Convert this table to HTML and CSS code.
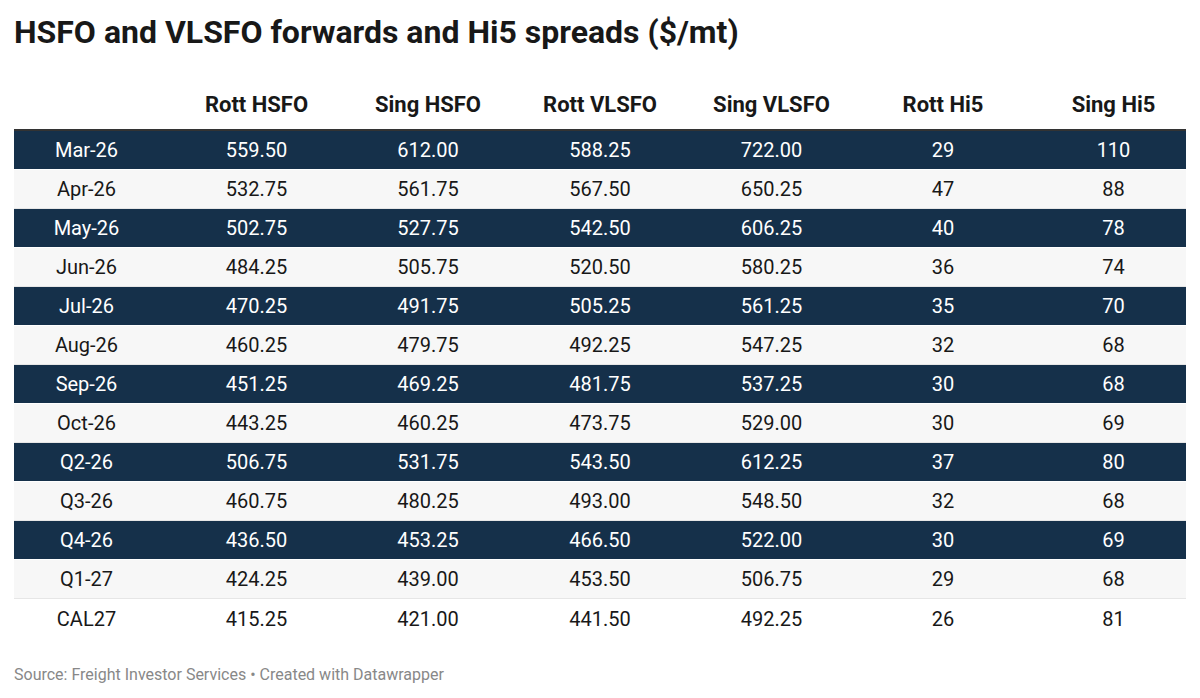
FILE: index.html
```html
<!DOCTYPE html>
<html lang="en">
<head>
<meta charset="utf-8">
<title>HSFO and VLSFO forwards and Hi5 spreads</title>
<link rel="stylesheet" href="styles.css">
</head>
<body>
<div class="chart">
  <h1 class="title">HSFO and VLSFO forwards and Hi5 spreads ($/mt)</h1>
  <div class="table">
    <div class="row head">
      <div class="cell first"></div>
      <div class="cell">Rott HSFO</div>
      <div class="cell">Sing HSFO</div>
      <div class="cell">Rott VLSFO</div>
      <div class="cell">Sing VLSFO</div>
      <div class="cell">Rott Hi5</div>
      <div class="cell last">Sing Hi5</div>
    </div>
    <div class="row dark"><div class="cell first">Mar-26</div><div class="cell">559.50</div><div class="cell">612.00</div><div class="cell">588.25</div><div class="cell">722.00</div><div class="cell">29</div><div class="cell last">110</div></div>
    <div class="row light"><div class="cell first">Apr-26</div><div class="cell">532.75</div><div class="cell">561.75</div><div class="cell">567.50</div><div class="cell">650.25</div><div class="cell">47</div><div class="cell last">88</div></div>
    <div class="row dark"><div class="cell first">May-26</div><div class="cell">502.75</div><div class="cell">527.75</div><div class="cell">542.50</div><div class="cell">606.25</div><div class="cell">40</div><div class="cell last">78</div></div>
    <div class="row light"><div class="cell first">Jun-26</div><div class="cell">484.25</div><div class="cell">505.75</div><div class="cell">520.50</div><div class="cell">580.25</div><div class="cell">36</div><div class="cell last">74</div></div>
    <div class="row dark"><div class="cell first">Jul-26</div><div class="cell">470.25</div><div class="cell">491.75</div><div class="cell">505.25</div><div class="cell">561.25</div><div class="cell">35</div><div class="cell last">70</div></div>
    <div class="row light"><div class="cell first">Aug-26</div><div class="cell">460.25</div><div class="cell">479.75</div><div class="cell">492.25</div><div class="cell">547.25</div><div class="cell">32</div><div class="cell last">68</div></div>
    <div class="row dark"><div class="cell first">Sep-26</div><div class="cell">451.25</div><div class="cell">469.25</div><div class="cell">481.75</div><div class="cell">537.25</div><div class="cell">30</div><div class="cell last">68</div></div>
    <div class="row light"><div class="cell first">Oct-26</div><div class="cell">443.25</div><div class="cell">460.25</div><div class="cell">473.75</div><div class="cell">529.00</div><div class="cell">30</div><div class="cell last">69</div></div>
    <div class="row dark"><div class="cell first">Q2-26</div><div class="cell">506.75</div><div class="cell">531.75</div><div class="cell">543.50</div><div class="cell">612.25</div><div class="cell">37</div><div class="cell last">80</div></div>
    <div class="row light"><div class="cell first">Q3-26</div><div class="cell">460.75</div><div class="cell">480.25</div><div class="cell">493.00</div><div class="cell">548.50</div><div class="cell">32</div><div class="cell last">68</div></div>
    <div class="row dark"><div class="cell first">Q4-26</div><div class="cell">436.50</div><div class="cell">453.25</div><div class="cell">466.50</div><div class="cell">522.00</div><div class="cell">30</div><div class="cell last">69</div></div>
    <div class="row light"><div class="cell first">Q1-27</div><div class="cell">424.25</div><div class="cell">439.00</div><div class="cell">453.50</div><div class="cell">506.75</div><div class="cell">29</div><div class="cell last">68</div></div>
    <div class="row plain"><div class="cell first">CAL27</div><div class="cell">415.25</div><div class="cell">421.00</div><div class="cell">441.50</div><div class="cell">492.25</div><div class="cell">26</div><div class="cell last">81</div></div>
  </div>
  <p class="footer">Source: Freight Investor Services • Created with Datawrapper</p>
</div>
</body>
</html>
```
FILE: styles.css
```css
* { box-sizing: border-box; }
html, body { margin: 0; padding: 0; background: #ffffff; }
body {
  font-family: Roboto, "Liberation Sans", Arial, sans-serif;
  color: #181818;
}
.chart {
  padding: 14px 14px 0 14px;
}
.title {
  margin: 0;
  font-size: 32px;
  line-height: 36px;
  font-weight: 700;
  color: #181818;
}
.table {
  margin-top: 37px;
  display: flex;
  flex-direction: column;
}
.row {
  display: grid;
  grid-template-columns: 157px 171px 172px 172px 171px 172px 1fr;
  align-items: center;
  height: 39px;
  font-size: 20px;
}
.row.head {
  height: 44px;
  font-size: 22px;
  font-weight: 700;
  border-bottom: 2px solid #333333;
  padding-bottom: 8px;
}
.row.dark {
  background: #15304a;
  color: #ffffff;
  border-bottom: 1px solid #ffffff;
}
.row.light {
  background: #f7f7f7;
  color: #181818;
  border-bottom: 1px solid #e6e6e6;
}
.row.plain {
  background: #ffffff;
}
.cell {
  text-align: center;
  white-space: nowrap;
}
.cell.first { padding-right: 12px; }
.cell.last { padding-left: 12px; }
.footer {
  margin: 27px 0 0 0;
  font-size: 16px;
  line-height: 20px;
  color: #888888;
}
```
